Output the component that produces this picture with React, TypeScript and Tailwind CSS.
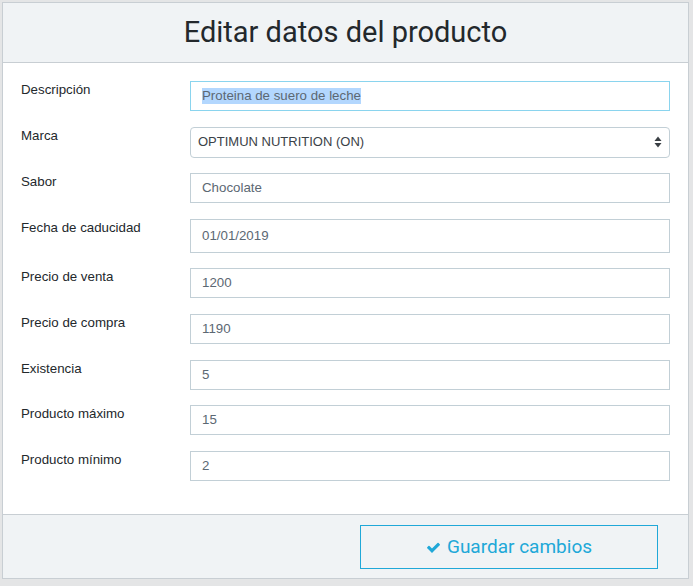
import React from "react";

const rows: { label: string; value: string; kind?: "focus" | "select" | "date" }[] = [
  { label: "Descripción", value: "Proteina de suero de leche", kind: "focus" },
  { label: "Marca", value: "OPTIMUN NUTRITION (ON)", kind: "select" },
  { label: "Sabor", value: "Chocolate" },
  { label: "Fecha de caducidad", value: "01/01/2019", kind: "date" },
  { label: "Precio de venta", value: "1200" },
  { label: "Precio de compra", value: "1190" },
  { label: "Existencia", value: "5" },
  { label: "Producto máximo", value: "15" },
  { label: "Producto mínimo", value: "2" },
];

function Field({ value, kind }: { value: string; kind?: "focus" | "select" | "date" }) {
  if (kind === "focus") {
    return (
      <div className="h-[30px] border border-[#8ad4ee] bg-white flex items-center pl-[11px] text-[13.3px] text-[#5c6873]">
        <span className="bg-[#b3d7fe] leading-[16px]">{value}</span>
      </div>
    );
  }
  if (kind === "select") {
    return (
      <div className="h-[31px] border border-[#c2cfd6] rounded-[4px] bg-white flex items-center justify-between pl-[7px] pr-[7px] text-[13px] text-[#3b4248]">
        <span>{value}</span>
        <svg width="8" height="12" viewBox="0 0 8 12">
          <path d="M4 0.5 L7.5 5 L0.5 5 Z" fill="#3a3f44" />
          <path d="M4 11.5 L7.5 7 L0.5 7 Z" fill="#3a3f44" />
        </svg>
      </div>
    );
  }
  return (
    <div
      className={`${kind === "date" ? "h-[34px] pt-[1px]" : "h-[30px]"} border border-[#c2cfd6] bg-white flex items-center pl-[11px] text-[13.3px] text-[#5c6873]`}
    >
      {value}
    </div>
  );
}

export default function App() {
  return (
    <div className="w-[693px] h-[586px] bg-[#e4e5e6] pt-[2px] pl-[2px]" style={{ fontFamily: '"Liberation Sans", Arial, sans-serif' }}>
      <div className="w-[687px] h-[577px] border border-[#c8ced3] bg-white flex flex-col">
        <div className="h-[60px] bg-[#f0f3f5] border-b border-[#c8ced3] flex items-center justify-center">
          <h1 className="text-[29px] text-[#23282c] pt-[1px]" style={{ fontFamily: "Roboto, sans-serif" }}>
            Editar datos del producto
          </h1>
        </div>
        <div className="flex-1 px-[18px] pt-[18px] flex flex-col gap-[15.6px]">
          {rows.map((r) => (
            <div key={r.label} className="flex">
              <div className="w-[169px] shrink-0 text-[13.3px] text-[#23282c] leading-[18px]">{r.label}</div>
              <div className="flex-1">
                <Field value={r.value} kind={r.kind} />
              </div>
            </div>
          ))}
        </div>
        <div className="h-[64px] bg-[#f0f3f5] border-t border-[#c8ced3] flex justify-end items-start pt-[10px] pr-[30px]">
          <button
            className="w-[298px] h-[44px] border border-[#20a8d8] text-[#20a8d8] flex items-center justify-center gap-[6px] text-[19px]"
            style={{ fontFamily: "Roboto, sans-serif" }}
          >
            <svg width="15" height="15" viewBox="0 0 1792 1792">
              <path
                fill="#20a8d8"
                d="M1671 566q0 40-28 68l-724 724-136 136q-28 28-68 28t-68-28l-136-136-362-362q-28-28-28-68t28-68l136-136q28-28 68-28t68 28l294 295 656-657q28-28 68-28t68 28l136 136q28 28 28 68z"
              />
            </svg>
            Guardar cambios
          </button>
        </div>
      </div>
    </div>
  );
}
